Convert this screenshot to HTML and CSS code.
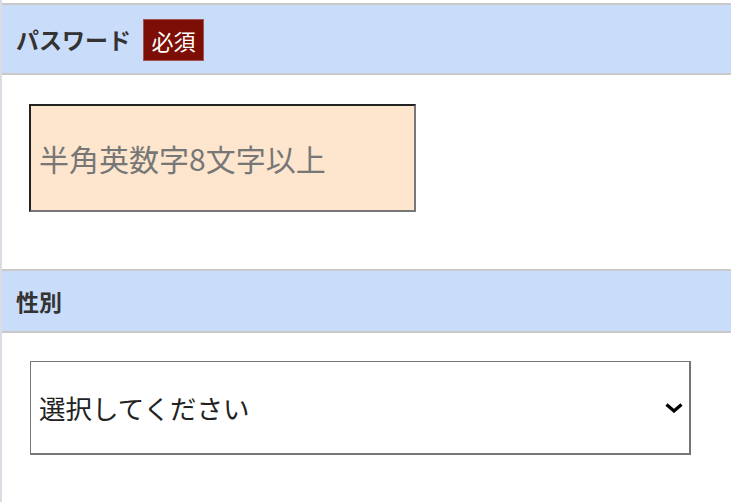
FILE: index.html
```html
<!DOCTYPE html>
<html lang="ja">
<head>
<meta charset="utf-8">
<title>フォーム</title>
<link rel="stylesheet" href="styles.css">
</head>
<body>
<div class="form">
  <div class="field-head">
    <span class="label">パスワード</span>
    <span class="badge">必須</span>
  </div>
  <div class="field-body field-body--password">
    <input class="text-input" type="password" placeholder="半角英数字8文字以上">
  </div>
  <div class="field-head field-head--plain">
    <span class="label">性別</span>
  </div>
  <div class="field-body field-body--select">
    <div class="select-wrap">
      <select class="select">
        <option>選択してください</option>
        <option>男性</option>
        <option>女性</option>
      </select>
      <svg class="chevron" width="18" height="10" viewBox="0 0 18 10" aria-hidden="true">
        <path d="M1.5 1.5 L9 8 L16.5 1.5" fill="none" stroke="#000" stroke-width="3.2"/>
      </svg>
    </div>
  </div>
</div>
</body>
</html>
```

FILE: styles.css
```css
html, body {
  margin: 0;
  padding: 0;
  background: #fff;
}

body {
  font-family: "Noto Sans CJK JP", "Noto Sans", sans-serif;
  color: #333;
}

.form {
  border-left: 2px solid #dcdce4;
  min-height: 502px;
  box-sizing: border-box;
  padding-top: 3px;
}

.field-head {
  display: flex;
  align-items: center;
  gap: 12px;
  background: #c9dcf9;
  border-top: 2px solid #c9c9c9;
  border-bottom: 2px solid #c9c9c9;
  padding: 0 14px;
  height: 68px;
}

.field-head--plain {
  height: 60px;
}

.label {
  font-size: 23px;
  font-weight: 700;
  color: #333;
  line-height: 1;
}

.badge {
  display: inline-flex;
  align-items: center;
  justify-content: center;
  width: 61px;
  height: 42px;
  box-sizing: border-box;
  background: #7c0e05;
  border: 1px solid #a35450;
  color: #fff;
  font-size: 22px;
  line-height: 1;
  margin-top: 2px;
}

.field-body--password {
  padding: 29px 0 57px 27px;
}

.field-body--select {
  padding: 28px 0 0 28px;
}

.text-input {
  display: block;
  width: 387px;
  height: 108px;
  box-sizing: border-box;
  margin: 0;
  padding: 0 8px;
  background: #fde6cd;
  border-style: solid;
  border-width: 2px;
  border-color: #222 #777 #777 #222;
  font-family: "Noto Sans CJK JP", "Noto Sans", sans-serif;
  font-size: 30px;
  color: #333;
  outline: none;
}

.text-input::placeholder {
  color: #777;
}

.select-wrap {
  position: relative;
  width: 661px;
}

.select {
  display: block;
  width: 100%;
  height: 94px;
  box-sizing: border-box;
  margin: 0;
  padding: 0 8px;
  appearance: none;
  -webkit-appearance: none;
  background: #fff;
  border-style: solid;
  border-color: #767676;
  border-width: 1px 2px 2px 1px;
  border-radius: 0;
  font-family: "Noto Sans CJK JP", "Noto Sans", sans-serif;
  font-size: 26.5px;
  color: #222;
  outline: none;
}

.chevron {
  position: absolute;
  right: 8px;
  top: 42px;
  pointer-events: none;
}
```
